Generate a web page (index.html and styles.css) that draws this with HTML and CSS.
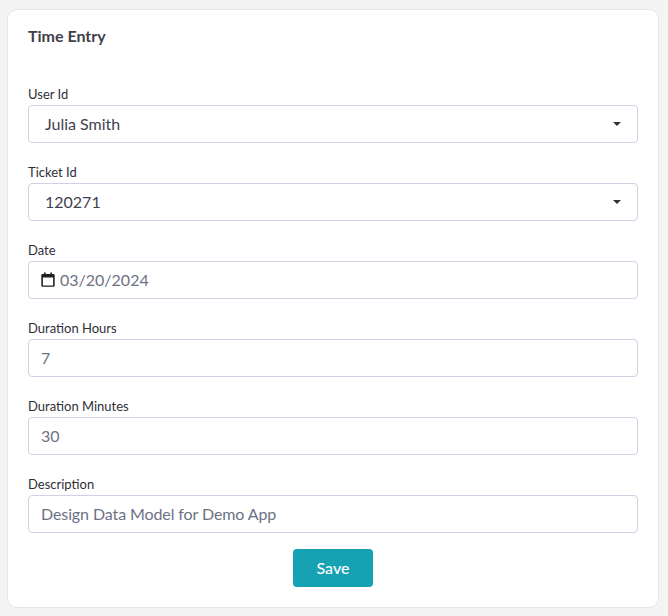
FILE: index.html
```html
<!DOCTYPE html>
<html lang="en">
<head>
    <meta charset="UTF-8">
    <meta name="viewport" content="width=device-width, initial-scale=1.0">
    <title>Time Entry</title>
    <link rel="stylesheet" href="styles.css">
</head>
<body>
    <div class="card">
        <h2 class="card-title">Time Entry</h2>
        <form class="entry-form">
            <div class="field">
                <label class="field-label">User Id</label>
                <div class="control control-select">
                    <span>Julia Smith</span>
                    <svg class="caret" width="8" height="4" viewBox="0 0 8 4"><path d="M0 0h8L4 4z" fill="#333"/></svg>
                </div>
            </div>
            <div class="field">
                <label class="field-label">Ticket Id</label>
                <div class="control control-select">
                    <span>120271</span>
                    <svg class="caret" width="8" height="4" viewBox="0 0 8 4"><path d="M0 0h8L4 4z" fill="#333"/></svg>
                </div>
            </div>
            <div class="field">
                <label class="field-label">Date</label>
                <div class="control control-date">
                    <svg class="calendar" width="14" height="15" viewBox="0 0 14 15">
                        <path d="M3 0.5h1.6v1.6h4.8V0.5H11v1.6h1.4c.7 0 1.3.6 1.3 1.3v10c0 .7-.6 1.3-1.3 1.3H1.6c-.7 0-1.3-.6-1.3-1.3v-10c0-.7.6-1.3 1.3-1.3H3zM1.9 5.4v8h10.2v-8z" fill="#222"/>
                    </svg>
                    <span>03/20/2024</span>
                </div>
            </div>
            <div class="field">
                <label class="field-label">Duration Hours</label>
                <div class="control">7</div>
            </div>
            <div class="field">
                <label class="field-label">Duration Minutes</label>
                <div class="control">30</div>
            </div>
            <div class="field">
                <label class="field-label">Description</label>
                <div class="control control-text">Design Data Model for Demo App</div>
            </div>
            <div class="actions">
                <button type="button" class="save-btn">Save</button>
            </div>
        </form>
    </div>
</body>
</html>
```

FILE: styles.css
```css
body {
    margin: 0;
    padding: 9px 9px 8px 7px;
    background-color: #f4f4f5;
    font-family: 'Lato', sans-serif;
    color: #3a3a44;
}
.card {
    background: #fff;
    border: 1px solid #e6e5ef;
    border-radius: 10px;
    padding: 16px 20px 19px 20px;
    box-sizing: border-box;
    height: 599px;
}
.card-title {
    margin: 0 0 40px;
    font-size: 16px;
    line-height: 20px;
    font-weight: 700;
    color: #40404a;
}
.field {
    margin-bottom: 21px;
}
.field-label {
    display: block;
    font-size: 13px;
    line-height: 17px;
    margin-bottom: 2px;
    color: #2f2f38;
}
.control {
    display: flex;
    align-items: center;
    height: 38px;
    box-sizing: border-box;
    padding: 0 12px 2px;
    border: 1px solid #d2d0e2;
    border-radius: 4px;
    font-size: 16px;
    color: #6c7285;
    background: #fff;
}
.control-select {
    justify-content: space-between;
    padding: 0 16px 2px;
    color: #3f4252;
}
.control-text {
    letter-spacing: -0.1px;
}
.caret {
    flex: none;
    margin-top: 2px;
}
.control-date {
    gap: 5px;
}
.calendar {
    flex: none;
    margin-top: 1px;
}
.actions {
    display: flex;
    justify-content: center;
    margin-top: -5px;
}
.save-btn {
    width: 80px;
    height: 38px;
    padding: 0 0 2px;
    border: none;
    border-radius: 4px;
    background-color: #17a2b4;
    color: #fff;
    font-family: inherit;
    font-size: 16px;
    font-weight: 500;
    cursor: pointer;
}
```
